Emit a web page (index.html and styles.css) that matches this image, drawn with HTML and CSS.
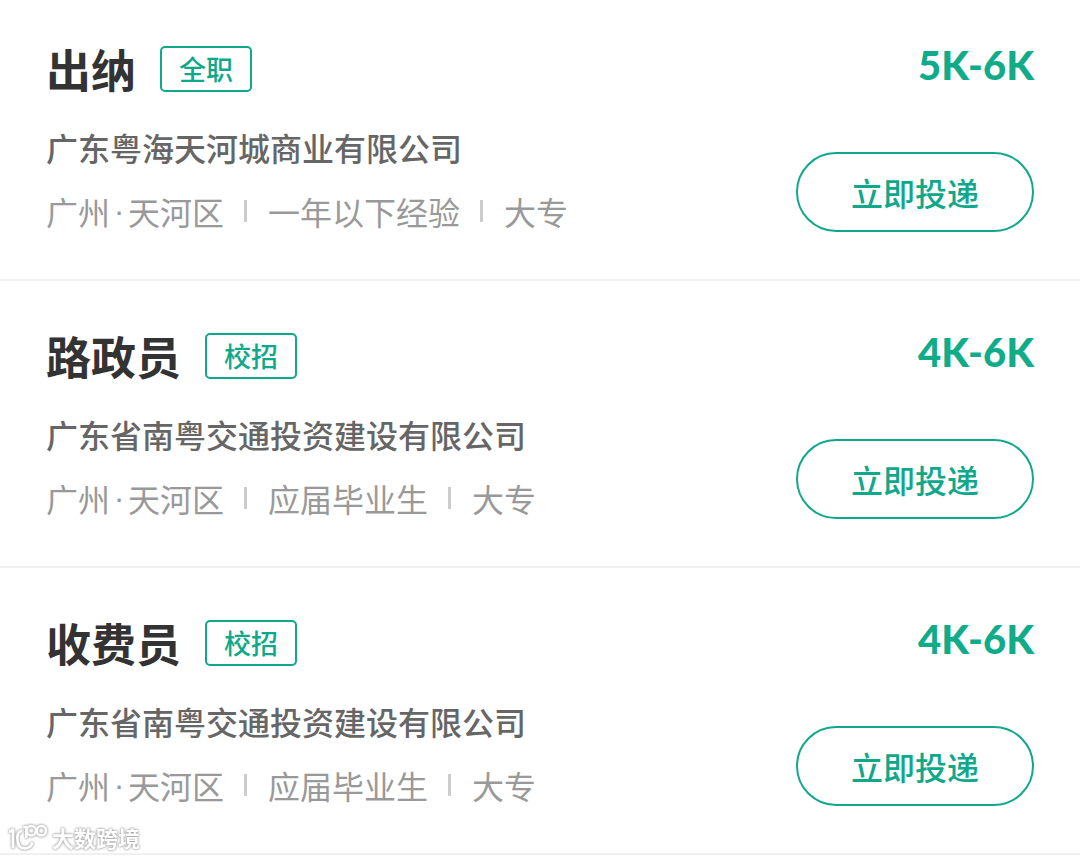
FILE: index.html
```
<!DOCTYPE html>
<html lang="zh-CN">

<head>
    <meta charset="UTF-8">
    <meta name="viewport" content="width=device-width, initial-scale=1.0">
    <title>职位列表</title>
    <link rel="stylesheet" href="styles.css">
</head>

<body>
    <ul class="job-list">
        <li class="job-item">
            <div class="job-info">
                <div class="job-head">
                    <h2 class="job-title">出纳</h2>
                    <span class="job-tag">全职</span>
                </div>
                <p class="job-company">广东粤海天河城商业有限公司</p>
                <div class="job-meta">
                    <span>广州<i class="dot">·</i>天河区</span>
                    <span>一年以下经验</span>
                    <span>大专</span>
                </div>
            </div>
            <div class="job-side">
                <strong class="job-salary">5K-6K</strong>
                <button type="button" class="apply-btn">立即投递</button>
            </div>
        </li>
        <li class="job-item">
            <div class="job-info">
                <div class="job-head">
                    <h2 class="job-title">路政员</h2>
                    <span class="job-tag">校招</span>
                </div>
                <p class="job-company">广东省南粤交通投资建设有限公司</p>
                <div class="job-meta">
                    <span>广州<i class="dot">·</i>天河区</span>
                    <span>应届毕业生</span>
                    <span>大专</span>
                </div>
            </div>
            <div class="job-side">
                <strong class="job-salary">4K-6K</strong>
                <button type="button" class="apply-btn">立即投递</button>
            </div>
        </li>
        <li class="job-item">
            <div class="job-info">
                <div class="job-head">
                    <h2 class="job-title">收费员</h2>
                    <span class="job-tag">校招</span>
                </div>
                <p class="job-company">广东省南粤交通投资建设有限公司</p>
                <div class="job-meta">
                    <span>广州<i class="dot">·</i>天河区</span>
                    <span>应届毕业生</span>
                    <span>大专</span>
                </div>
            </div>
            <div class="job-side">
                <strong class="job-salary">4K-6K</strong>
                <button type="button" class="apply-btn">立即投递</button>
            </div>
        </li>
    </ul>

    <!-- 水印 -->
    <div class="watermark">
        <svg class="watermark-logo" viewBox="0 0 120 84" aria-hidden="true">
            <path d="M3 26 Q12 26 15 18 V76" />
            <path d="M42 24 Q28 24 28 46 Q28 76 50 76 Q69 76 73 58" />
            <path d="M46 12 H55 V46" />
            <circle cx="70" cy="23" r="14" />
            <circle cx="100" cy="23" r="14" />
        </svg>
        <span>大数跨境</span>
    </div>
</body>

</html>
```

FILE: styles.css
```
* {
    margin: 0;
    padding: 0;
    box-sizing: border-box
}

body {
    font-family: "Noto Sans CJK SC", sans-serif;
    background: #fff;
    color: #333
}

.job-list {
    list-style: none
}

.job-item {
    display: flex;
    justify-content: space-between;
    padding: 45px 46px 44px;
    border-bottom: 2px solid #f0f0f0
}

.job-item:first-child {
    padding-top: 39px
}

.job-head {
    display: flex;
    align-items: center;
    gap: 24px;
    margin-bottom: 24px
}

.job-title {
    font-size: 45px;
    line-height: 60px;
    font-weight: 700
}

.job-tag {
    padding: 0 17px;
    border: 2px solid #10a88a;
    border-radius: 5px;
    color: #10a88a;
    font-size: 27px;
    line-height: 42px;
    font-weight: 500
}

.job-company {
    margin-bottom: 16px;
    color: #666;
    font-size: 32px;
    line-height: 48px;
    font-weight: 500
}

.job-meta {
    display: flex;
    align-items: center;
    color: #999;
    font-size: 32px;
    line-height: 48px
}

.job-meta span {
    display: flex;
    align-items: center
}

.job-meta span + span::before {
    content: '';
    width: 3px;
    height: 22px;
    margin: 0 21px 0 20px;
    background: #ccc
}

.dot {
    width: 18px;
    font-family: "Liberation Sans", sans-serif;
    font-style: normal;
    text-align: center
}

.job-side {
    display: flex;
    flex-direction: column;
    align-items: flex-end;
    gap: 60px
}

.job-salary {
    color: #10ac8a;
    font-family: Lato, sans-serif;
    font-size: 40px;
    line-height: 53px;
    font-weight: 900
}

.apply-btn {
    padding: 0 53px;
    border: 2px solid #10a88a;
    border-radius: 40px;
    background: #fff;
    color: #10a88a;
    font-family: inherit;
    font-size: 32px;
    line-height: 76px;
    font-weight: 500;
    cursor: pointer
}

.watermark {
    position: fixed;
    left: 8px;
    bottom: 7px;
    display: flex;
    align-items: center;
    gap: 4px;
    color: #fff;
    font-size: 22px;
    line-height: 28px;
    font-weight: 700;
    filter: drop-shadow(0 0 1px #999) drop-shadow(0 0 1px #ccc)
}

.watermark-logo {
    width: 40px;
    height: 28px;
    fill: none;
    stroke: #fff;
    stroke-width: 8
}
```
